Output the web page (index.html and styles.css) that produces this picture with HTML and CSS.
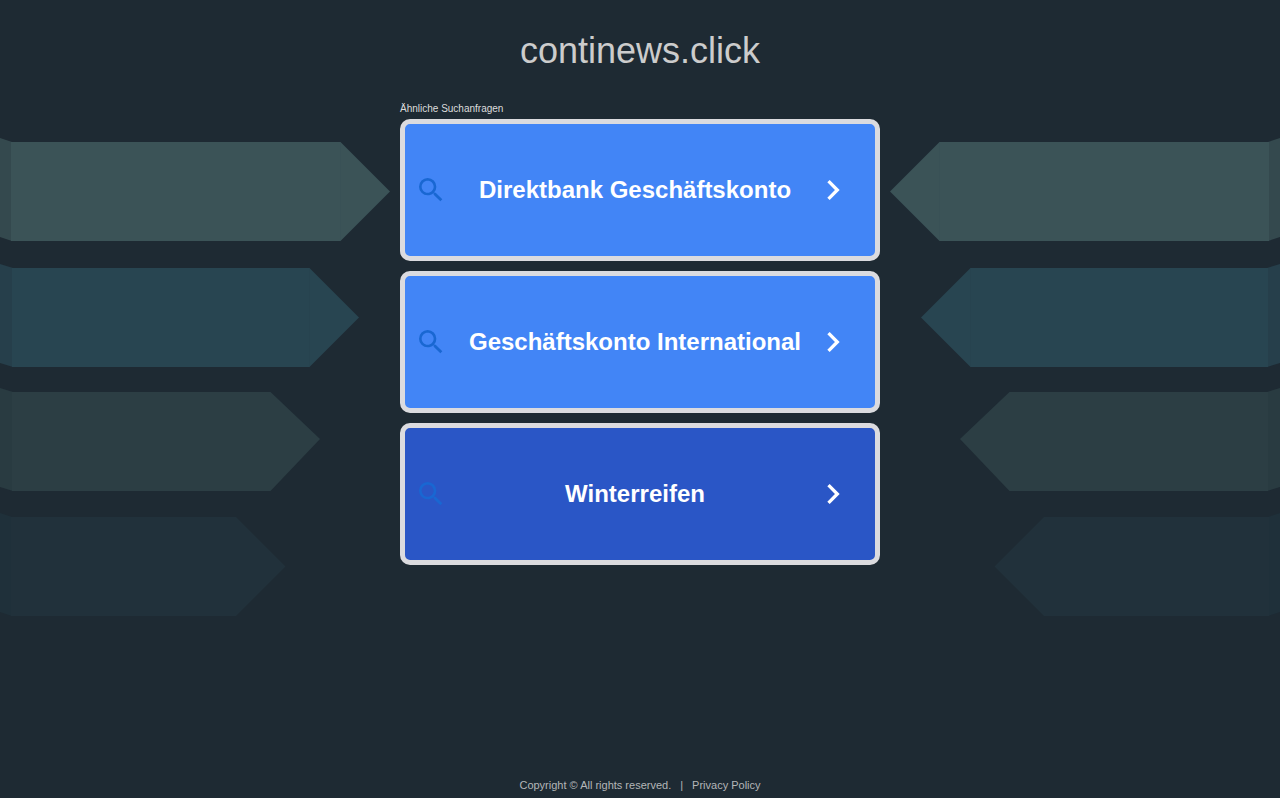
FILE: index.html
```html
<!DOCTYPE html>
<html lang="de">
<head>
<meta charset="utf-8">
<meta name="viewport" content="width=device-width, initial-scale=1">
<title>continews.click</title>
<link rel="stylesheet" href="styles.css">
</head>
<body class="page">
<svg class="backdrop" width="1280" height="640" viewBox="0 0 1280 640" aria-hidden="true">
  <defs>
    <g id="arrows">
      <path fill="#34494e" d="M0 138l12 4v99l-12-4z"/>
      <path fill="#3b5357" d="M11 142h329.500l49.500 49.500l-49.500 49.500h-329.500z"/>
      <path fill="none" stroke="#395156" d="M340.500 143v97"/>
      <path fill="#263f4b" d="M0 264l13 4v99l-13-4z"/>
      <path fill="#284551" d="M12 268h297.500l49.500 49.500l-49.500 49.500h-297.500z"/>
      <path fill="none" stroke="#27434f" d="M309.500 269v97"/>
      <path fill="#293b41" d="M0 388l13 4v99l-13-4z"/>
      <path fill="#2c3e44" d="M12 392h258.500l49.500 47l-49.500 52h-258.500z"/>
      <path fill="#1f303a" d="M0 513l12 4v99l-12-4z"/>
      <path fill="#21313b" d="M11 517h225l49.500 49.500l-49.500 49.500h-225z"/>
    </g>
  </defs>
  <use href="#arrows"/>
  <use href="#arrows" transform="translate(1280 0) scale(-1 1)"/>
</svg>
<svg class="sprite" aria-hidden="true">
  <symbol id="search" viewBox="0 0 24 24"><path d="M15.500 14h-.79l-.28-.27A6.471 6.471 0 0 0 16 9.500 6.500 6.500 0 1 0 9.500 16c1.610 0 3.090-.59 4.230-1.570l.27.28v.79l5 4.990L20.490 19l-4.990-5zm-6 0C7.010 14 5 11.990 5 9.500S7.010 5 9.500 5 14 7.010 14 9.500 11.990 14 9.500 14z"/></symbol>
  <symbol id="chevron" viewBox="0 0 24 24"><path d="M10 6L8.590 7.410 13.170 12l-4.580 4.590L10 18l6-6z"/></symbol>
</svg>
<header class="header"><h1 class="title">continews.click</h1></header>
<main class="content">
  <h2 class="label">Ähnliche Suchanfragen</h2>
  <nav class="list">
    <a class="card" href="#"><svg class="search-icon"><use href="#search"/></svg><span class="card-text">Direktbank Geschäftskonto</span><svg class="chevron-icon"><use href="#chevron"/></svg></a>
    <a class="card" href="#"><svg class="search-icon"><use href="#search"/></svg><span class="card-text">Geschäftskonto International</span><svg class="chevron-icon"><use href="#chevron"/></svg></a>
    <a class="card card-active" href="#"><svg class="search-icon"><use href="#search"/></svg><span class="card-text">Winterreifen</span><svg class="chevron-icon"><use href="#chevron"/></svg></a>
  </nav>
</main>
<footer class="footer"><span>Copyright © All rights reserved.</span><span>|</span><a class="footer-link" href="#">Privacy Policy</a></footer>
</body>
</html>
```

FILE: styles.css
```css
* { box-sizing: border-box; }
.page {
  position: relative;
  display: flex;
  flex-direction: column;
  min-height: 100vh;
  margin: 0;
  overflow-x: hidden;
  background: #1e2a33;
  font-family: "Liberation Sans", Arial, sans-serif;
}
.backdrop {
  position: absolute;
  top: 0;
  left: 50%;
  margin-left: -640px;
  z-index: -1;
}
.sprite { position: absolute; width: 0; height: 0; }
.header { padding: 30px 16px; text-align: center; }
.title {
  margin: 0;
  color: #ccc;
  font-size: 36px;
  font-weight: 400;
  line-height: 42px;
}
.content { flex: 1; width: 100%; max-width: 480px; margin: 0 auto; }
.label {
  margin: 0 0 3px;
  color: #dcdcdc;
  font-size: 10px;
  font-weight: 400;
  line-height: 14px;
}
.list { display: flex; flex-direction: column; gap: 10px; }
.card {
  display: flex;
  align-items: center;
  min-height: 142px;
  padding: 0 22px 0 10px;
  border: 5px solid #dbdbdf;
  border-radius: 10px;
  background: #4285f6;
  color: #fff;
  font-size: 24px;
  font-weight: 700;
  line-height: 28px;
  text-decoration: none;
}
.card-active { background: #2a56c6; }
.card-text { flex: 1; padding-left: 10px; text-align: center; }
.search-icon { width: 32px; height: 32px; fill: #1967d2; }
.chevron-icon { width: 40px; height: 40px; fill: #fff; }
.footer {
  display: flex;
  justify-content: center;
  gap: 9px;
  padding: 6px 0;
  color: #b4b6b8;
  font-size: 11px;
  line-height: 13px;
}
.footer-link { color: inherit; text-decoration: none; }
```
